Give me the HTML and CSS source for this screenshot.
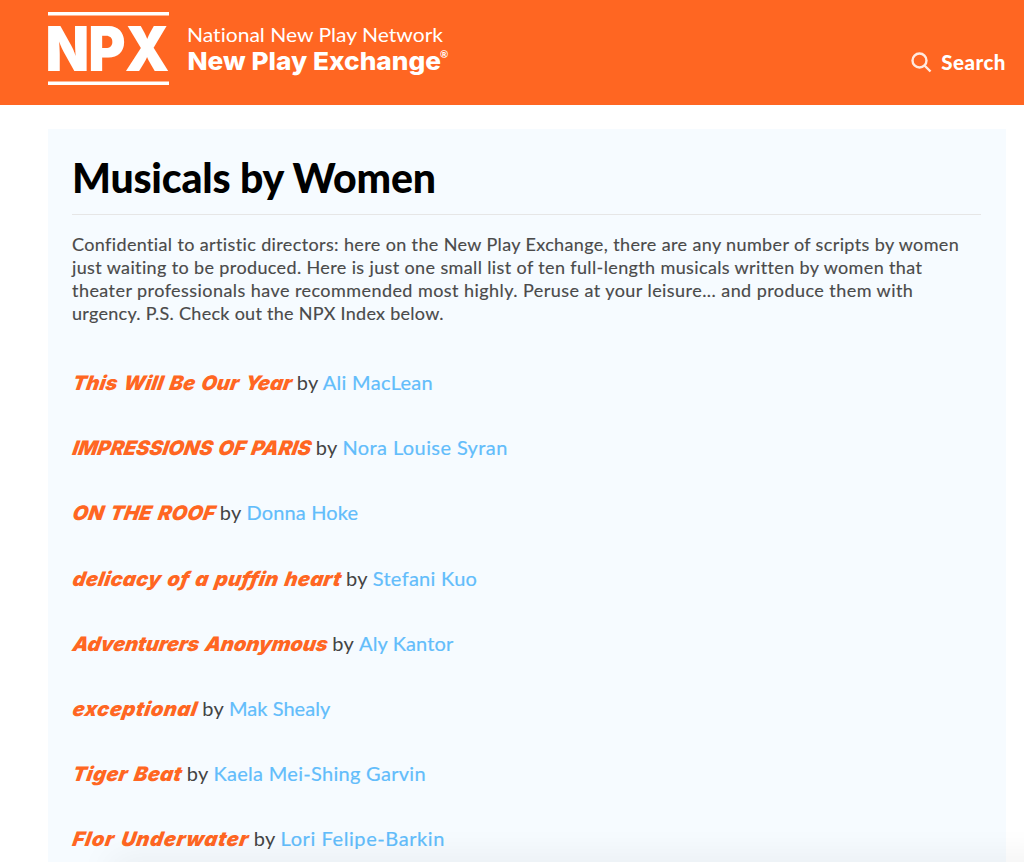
FILE: index.html
```html
<!DOCTYPE html>
<html lang="en">
<head>
    <meta charset="UTF-8">
    <meta name="viewport" content="width=device-width, initial-scale=1.0">
    <title>Musicals by Women | New Play Exchange</title>
    <link rel="stylesheet" href="styles.css">
</head>
<body>
    <header class="header">
        <a class="logo">
            <svg width="402" height="76" viewBox="0 0 402 76">
                <rect x="0" y="1" width="121" height="3.5"/>
                <text class="logo-npx" x="-2.500" y="59.500" textLength="123" lengthAdjust="spacingAndGlyphs">NPX</text>
                <rect x="0" y="70.5" width="121" height="3.5"/>
                <text class="logo-top" x="139" y="30.500" textLength="256" lengthAdjust="spacingAndGlyphs">National New Play Network</text>
                <text class="logo-bottom" x="139.500" y="59" textLength="253.500" lengthAdjust="spacingAndGlyphs">New Play Exchange</text>
                <text class="logo-reg" x="392" y="47">®</text>
            </svg>
        </a>
        <a class="search">
            <svg width="21" height="21" viewBox="0 0 21 21"><circle cx="8.500" cy="8.500" r="7"/><path d="M13.500 13.500L19.500 19.500"/></svg>
            <span>Search</span>
        </a>
    </header>
    <main class="content">
        <h1>Musicals by Women</h1>
        <p class="intro">
            <span class="line1">Confidential to artistic directors: here on the New Play Exchange, there are any number of scripts by women</span>
            <span class="line2">just waiting to be produced. Here is just one small list of ten full-length musicals written by women that</span>
            <span class="line3">theater professionals have recommended most highly. Peruse at your leisure... and produce them with</span>
            <span class="line4">urgency. P.S. Check out the NPX Index below.</span>
        </p>
        <ul class="plays">
            <li class="play1"><em>This Will Be Our Year</em> by <a>Ali MacLean</a></li>
            <li class="play2"><em>IMPRESSIONS OF PARIS</em> by <a>Nora Louise Syran</a></li>
            <li class="play3"><em>ON THE ROOF</em> by <a>Donna Hoke</a></li>
            <li class="play4"><em>delicacy of a puffin heart</em> by <a>Stefani Kuo</a></li>
            <li class="play5"><em>Adventurers Anonymous</em> by <a>Aly Kantor</a></li>
            <li class="play6"><em>exceptional</em> by <a>Mak Shealy</a></li>
            <li class="play7"><em>Tiger Beat</em> by <a>Kaela Mei-Shing Garvin</a></li>
            <li class="play8"><em>Flor Underwater</em> by <a>Lori Felipe-Barkin</a></li>
        </ul>
    </main>
    <div class="bottom-shade"></div>
</body>
</html>
```
FILE: styles.css
```css
*{margin: 0;padding: 0;box-sizing: border-box;}
body{height: 862px;overflow: hidden;background: #fff;color: #444;font-family: Lato, "Liberation Sans", sans-serif;font-variant-ligatures: none;}
.header{display: flex;justify-content: space-between;height: 105px;padding: 11px 18px 0 48px;background: #ff6622;color: #fff;}
.logo svg{display: block;overflow: visible;fill: #fff;}
.logo-npx{font: 900 62px Inter, sans-serif;letter-spacing: -1px;}
.logo-top{font: 400 20px Lato, sans-serif;font-variant-ligatures: none;}
.logo-bottom{font: 800 25px Inter, sans-serif;}
.logo-reg{font: 700 10px Lato, sans-serif;}
.search{display: flex;gap: 9px;align-items: center;height: 24px;margin-top: 39px;font-size: 20.5px;font-weight: 900;letter-spacing: .5px;}
.search svg{fill: none;stroke: #ffe9df;stroke-width: 2.4;}
.content{height: 740px;margin: 24px 18px 0 48px;padding: 24px 25px 0 24px;background: #f6fbff;}
h1{height: 62px;border-bottom: 1px solid #e6e6e6;color: #000;font-size: 41px;line-height: 50px;font-weight: 900;letter-spacing: -.2px;}
.intro{margin-top: 18px;color: #4a4a4a;font-size: 18px;line-height: 23px;white-space: nowrap;-webkit-text-stroke: .15px #4a4a4a;}
.intro span{display: block;}
.line1{letter-spacing: .37px;}
.line2{letter-spacing: .37px;}
.line3{letter-spacing: .44px;}
.line4{letter-spacing: .28px;}

.plays{margin-top: 43px;list-style: none;font-size: 20px;letter-spacing: .3px;}
.plays li{height: 65.2px;line-height: 28px;}
.plays em{display: inline-block;color: #ff6622;font-family: Inter, sans-serif;font-weight: 900;font-feature-settings: "cv11";word-spacing: 2px;transform: translateX(1px) skewX(-10deg);}
.plays a{color: #62bdfb;-webkit-text-stroke: .2px #62bdfb;}
.play1 em{letter-spacing: .12px;}
.play2 em{letter-spacing: -.06px;}
.play2 a{letter-spacing: .4px;}
.play3 em{letter-spacing: .19px;}
.play3 a{letter-spacing: .15px;}
.play4 em{letter-spacing: .28px;}
.play5 em{letter-spacing: -.05px;}
.play5 a{letter-spacing: .12px;}
.play6 em{letter-spacing: .55px;}
.play6 a{letter-spacing: .05px;}
.play7 em{letter-spacing: .36px;}
.play8 em{letter-spacing: .77px;}
.play8 a{letter-spacing: .58px;}

.bottom-shade{position: fixed;left: 110px;right: -40px;bottom: -20px;height: 20px;box-shadow: 0 0 36px rgba(0,0,0,.09);}
```
